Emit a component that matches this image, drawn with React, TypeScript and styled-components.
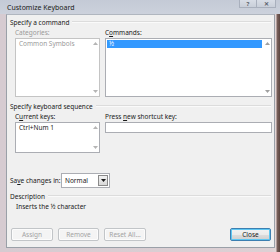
import styled, { createGlobalStyle } from 'styled-components'

const GlobalStyle = createGlobalStyle`
  html, body { margin: 0; padding: 0; background: #6b5754; }
  body { font-family: "Noto Sans", "Open Sans", sans-serif; font-size: 6.5px; color: #1a1a1a; }
  * { box-sizing: border-box; }
`

const Window = styled.div`
  width: 280px;
  height: 252px;
  display: flex;
  flex-direction: column;
  background: linear-gradient(to right, #d6cbd1 0, #ddd0d4 270px, #e4d6d6 276px, #7c625c 277px, #5b4541 280px);
  overflow: hidden;
`

const TitleBar = styled.div`
  height: 14px;
  flex: none;
  display: flex;
  align-items: center;
  padding-left: 7px;
  background: linear-gradient(to bottom, #c4cad6, #ccd1dc);
  font-size: 7px;
  color: #202020;
`

const TitleText = styled.span`
  flex: 1;
  margin-top: 1px;
`

const CaptionButtons = styled.div`
  display: flex;
  align-self: flex-start;
  height: 8px;
  margin-right: 4px;
`

const CaptionButton = styled.div<{ $w: number }>`
  width: ${p => p.$w}px;
  height: 8px;
  display: flex;
  align-items: center;
  justify-content: center;
  border: 1px solid #a9b0bd;
  border-top: none;
  border-left-width: ${p => (p.$w > 18 ? 0 : 1)}px;
  background: linear-gradient(to bottom, #d8dde6, #c9cfd9);
  color: #59606b;
  font-size: 6px;
  font-weight: bold;
  line-height: 1;
`

const Client = styled.div`
  flex: 1;
  margin: 0 5px 4px 6px;
  background: #f0f0f0;
  border: 1px solid #9aa0a8;
  border-top-color: #b0b6bf;
  display: flex;
  flex-direction: column;
  padding: 0 3px 0 3px;
`

const GroupHeader = styled.div<{ $mt: number }>`
  height: 12px;
  margin-top: ${p => p.$mt}px;
  display: flex;
  align-items: center;
  gap: 3px;
  color: #202020;
  &::after {
    content: '';
    flex: 1;
    border-top: 1px solid #dcdcdc;
    border-bottom: 1px solid #fafafa;
  }
`

const Pair = styled.div<{ $mt: number }>`
  display: grid;
  grid-template-columns: 85px 167px;
  column-gap: 5px;
  margin-top: ${p => p.$mt}px;
  padding-left: 5px;
`

const Label = styled.div<{ $disabled?: boolean }>`
  height: 8px;
  line-height: 8px;
  margin-bottom: 1px;
  white-space: nowrap;
  color: ${p => (p.$disabled ? '#9a9a9a' : '#1a1a1a')};
`

const Key = styled.span`
  text-decoration: underline;
`

const ListBox = styled.div<{ $h: number; $disabled?: boolean }>`
  height: ${p => p.$h}px;
  background: #fff;
  border: 1px solid ${p => (p.$disabled ? '#c4c4c4' : '#abadb3')};
  display: flex;
  color: ${p => (p.$disabled ? '#9a9a9a' : '#1a1a1a')};
`

const Items = styled.div`
  flex: 1;
  padding: 1px;
`

const Item = styled.div<{ $selected?: boolean }>`
  height: 8px;
  line-height: 8px;
  padding-left: 2px;
  background: ${p => (p.$selected ? '#3399ff' : 'transparent')};
  color: ${p => (p.$selected ? '#fff' : 'inherit')};
`

const ScrollBar = styled.div`
  width: 8px;
  display: flex;
  flex-direction: column;
  justify-content: space-between;
  align-items: center;
  padding: 3px 0;
`

const TextInput = styled.div`
  height: 11px;
  background: #fff;
  border: 1px solid #abadb3;
`

const SaveRow = styled.div`
  display: flex;
  align-items: center;
  margin-top: 20px;
  height: 15px;
`

const SaveLabel = styled.span`
  width: 51px;
  white-space: nowrap;
`

const Select = styled.div`
  width: 49px;
  height: 15px;
  display: flex;
  background: #fff;
  border: 1px solid #abadb3;
  padding: 1px;
`

const SelectValue = styled.div`
  flex: 1;
  padding-left: 2px;
  line-height: 11px;
`

const SelectButton = styled.div`
  width: 10px;
  display: flex;
  align-items: center;
  justify-content: center;
  background: linear-gradient(to bottom, #f2f2f2, #d8d8d8);
  border: 1px solid #8a8a8a;
`

const DescText = styled.div`
  margin-top: 1px;
  padding-left: 6px;
  height: 8px;
  line-height: 8px;
`

const ButtonRow = styled.div`
  display: flex;
  gap: 5px;
  margin-top: 17px;
  padding-left: 1px;
`

const Button = styled.div<{ $w: number; $disabled?: boolean; $focused?: boolean }>`
  width: ${p => p.$w}px;
  height: 13px;
  display: flex;
  align-items: center;
  justify-content: center;
  border-radius: 2px;
  border: 1px solid ${p => (p.$disabled ? '#c2c5c8' : '#3c7fb1')};
  background: ${p =>
    p.$disabled ? '#f4f4f4' : 'linear-gradient(to bottom, #f2f2f2 0, #ebebeb 50%, #dddddd 51%, #cfcfcf 100%)'};
  box-shadow: ${p => (p.$focused ? 'inset 0 0 0 1px #5fc7f2' : 'inset 0 0 0 1px #fcfcfc')};
  color: ${p => (p.$disabled ? '#a3a3a3' : '#1a1a1a')};
`

const Spacer = styled.div`
  flex: 1;
`

const Arrow = ({ down, color = '#8c8c8c' }: { down?: boolean; color?: string }) => (
  <svg width="5" height="3" viewBox="0 0 5 3">
    <path d={down ? 'M0 0H5L2.5 3Z' : 'M0 3H5L2.5 0Z'} fill={color} />
  </svg>
)

export default function App() {
  return (
    <>
      <GlobalStyle />
      <Window>
        <TitleBar>
          <TitleText>Customize Keyboard</TitleText>
          <CaptionButtons>
            <CaptionButton $w={18}>?</CaptionButton>
            <CaptionButton $w={19}>✕</CaptionButton>
          </CaptionButtons>
        </TitleBar>
        <Client>
          <GroupHeader $mt={1}>Specify a command</GroupHeader>
          <Pair $mt={1}>
            <div>
              <Label $disabled>Categories:</Label>
              <ListBox $h={59} $disabled>
                <Items>
                  <Item>Common Symbols</Item>
                </Items>
                <ScrollBar>
                  <Arrow color="#b5b5b5" />
                  <Arrow down color="#b5b5b5" />
                </ScrollBar>
              </ListBox>
            </div>
            <div>
              <Label>
                C<Key>o</Key>mmands:
              </Label>
              <ListBox $h={59}>
                <Items>
                  <Item $selected>½</Item>
                </Items>
                <ScrollBar>
                  <Arrow color="#a0a0a0" />
                  <Arrow down color="#a0a0a0" />
                </ScrollBar>
              </ListBox>
            </div>
          </Pair>
          <GroupHeader $mt={3}>Specify keyboard sequence</GroupHeader>
          <Pair $mt={1}>
            <div>
              <Label>
                C<Key>u</Key>rrent keys:
              </Label>
              <ListBox $h={31}>
                <Items>
                  <Item>Ctrl+Num 1</Item>
                </Items>
                <ScrollBar>
                  <Arrow color="#b5b5b5" />
                  <Arrow down color="#b5b5b5" />
                </ScrollBar>
              </ListBox>
            </div>
            <div>
              <Label>
                Press <Key>n</Key>ew shortcut key:
              </Label>
              <TextInput />
            </div>
          </Pair>
          <SaveRow>
            <SaveLabel>
              Sa<Key>v</Key>e changes in:
            </SaveLabel>
            <Select>
              <SelectValue>Normal</SelectValue>
              <SelectButton>
                <Arrow down color="#1a1a1a" />
              </SelectButton>
            </Select>
          </SaveRow>
          <GroupHeader $mt={2}>Description</GroupHeader>
          <DescText>Inserts the ½ character</DescText>
          <ButtonRow>
            <Button $w={42} $disabled>Assign</Button>
            <Button $w={41} $disabled>Remove</Button>
            <Button $w={42} $disabled>Reset All...</Button>
            <Spacer />
            <Button $w={41} $focused>Close</Button>
          </ButtonRow>
        </Client>
      </Window>
    </>
  )
}
